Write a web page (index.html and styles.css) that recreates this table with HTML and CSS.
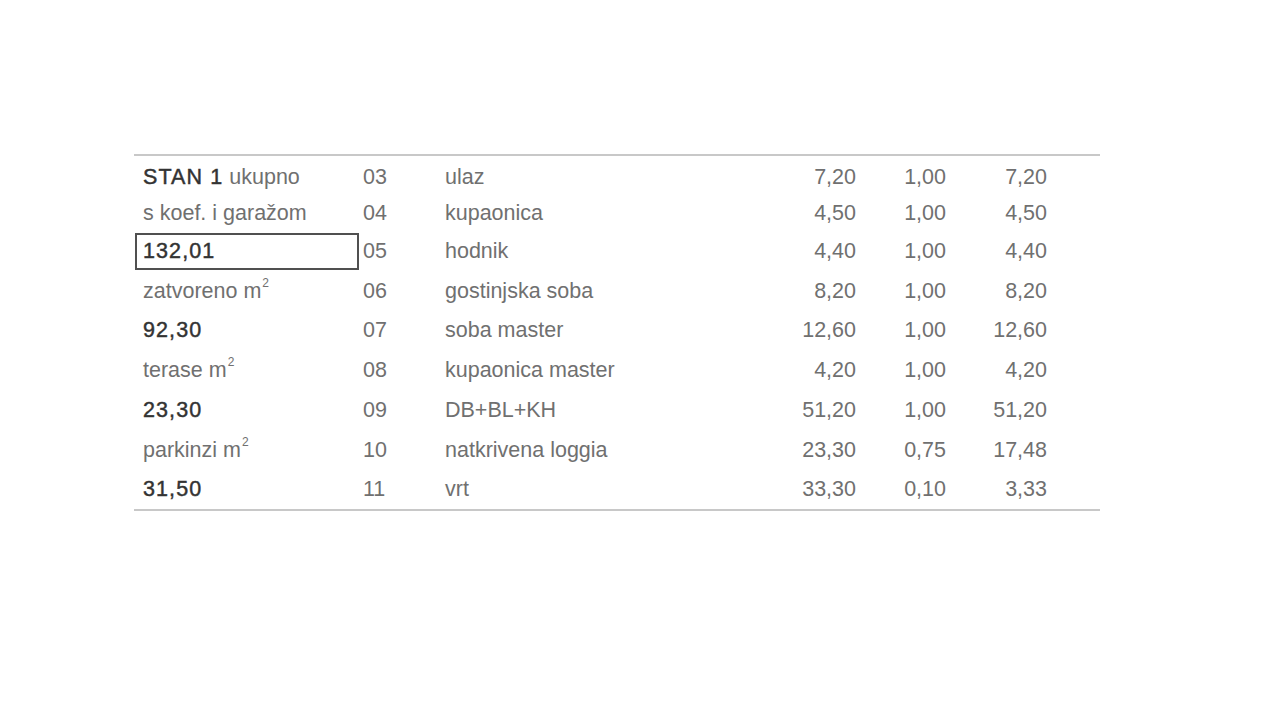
FILE: index.html
```html
<!DOCTYPE html>
<html lang="hr">
<head>
<meta charset="utf-8">
<title>STAN 1</title>
<link rel="stylesheet" href="styles.css">
</head>
<body>
<div class="page">
  <div class="sheet">
    <div class="c1 first"><span><span class="strong">STAN 1</span> ukupno</span></div><div class="c2 first">03</div><div class="c3 first">ulaz</div><div class="n first">7,20</div><div class="n first">1,00</div><div class="n first">7,20</div><div></div>
    <div class="c1">s koef. i garažom</div><div class="c2">04</div><div class="c3">kupaonica</div><div class="n">4,50</div><div class="n">1,00</div><div class="n">4,50</div><div></div>
    <div class="c1 boxed"><span class="strong">132,01</span></div><div class="c2">05</div><div class="c3">hodnik</div><div class="n">4,40</div><div class="n">1,00</div><div class="n">4,40</div><div></div>
    <div class="c1"><span>zatvoreno m<sup>2</sup></span></div><div class="c2">06</div><div class="c3">gostinjska soba</div><div class="n">8,20</div><div class="n">1,00</div><div class="n">8,20</div><div></div>
    <div class="c1"><span class="strong">92,30</span></div><div class="c2">07</div><div class="c3">soba master</div><div class="n">12,60</div><div class="n">1,00</div><div class="n">12,60</div><div></div>
    <div class="c1"><span>terase m<sup>2</sup></span></div><div class="c2">08</div><div class="c3">kupaonica master</div><div class="n">4,20</div><div class="n">1,00</div><div class="n">4,20</div><div></div>
    <div class="c1"><span class="strong">23,30</span></div><div class="c2">09</div><div class="c3">DB+BL+KH</div><div class="n">51,20</div><div class="n">1,00</div><div class="n">51,20</div><div></div>
    <div class="c1"><span>parkinzi m<sup>2</sup></span></div><div class="c2">10</div><div class="c3">natkrivena loggia</div><div class="n">23,30</div><div class="n">0,75</div><div class="n">17,48</div><div></div>
    <div class="c1"><span class="strong">31,50</span></div><div class="c2">11</div><div class="c3">vrt</div><div class="n">33,30</div><div class="n">0,10</div><div class="n">3,33</div><div></div>
  </div>
</div>
</body>
</html>
```
FILE: styles.css
```css
html, body {
  margin: 0;
  padding: 0;
  background: #ffffff;
}
.page {
  width: 1280px;
  height: 721px;
  padding: 154px 0 0 134px;
  box-sizing: border-box;
  font-family: "Liberation Sans", Arial, sans-serif;
  font-size: 21.5px;
  color: #707070;
}
.sheet {
  display: grid;
  width: 966px;
  grid-template-columns: 225px 82px 320px 99px 90px 101px 49px;
  grid-template-rows: 39px 37px 39px 40px 39px 40px 40px 40px 39px;
  border-top: 2px solid #c8c8c8;
  border-bottom: 2px solid #c8c8c8;
}
.sheet > div {
  display: flex;
  align-items: center;
  white-space: nowrap;
}
.sheet > .first {
  padding-top: 3px;
}
.c1 {
  padding-left: 9px;
}
.c2 {
  padding-left: 4px;
}
.c3 {
  padding-left: 4px;
}
.n {
  justify-content: flex-end;
  padding-right: 4px;
}
.strong {
  color: #333333;
  -webkit-text-stroke: 0.45px #333333;
  letter-spacing: 1.1px;
}
.boxed {
  margin: 1px 0 1px 1px;
  border: 2px solid #505050;
  padding-left: 6px;
}
sup {
  font-size: 12px;
  line-height: 0;
  vertical-align: baseline;
  position: relative;
  top: -11px;
  margin-left: 1px;
}
```
